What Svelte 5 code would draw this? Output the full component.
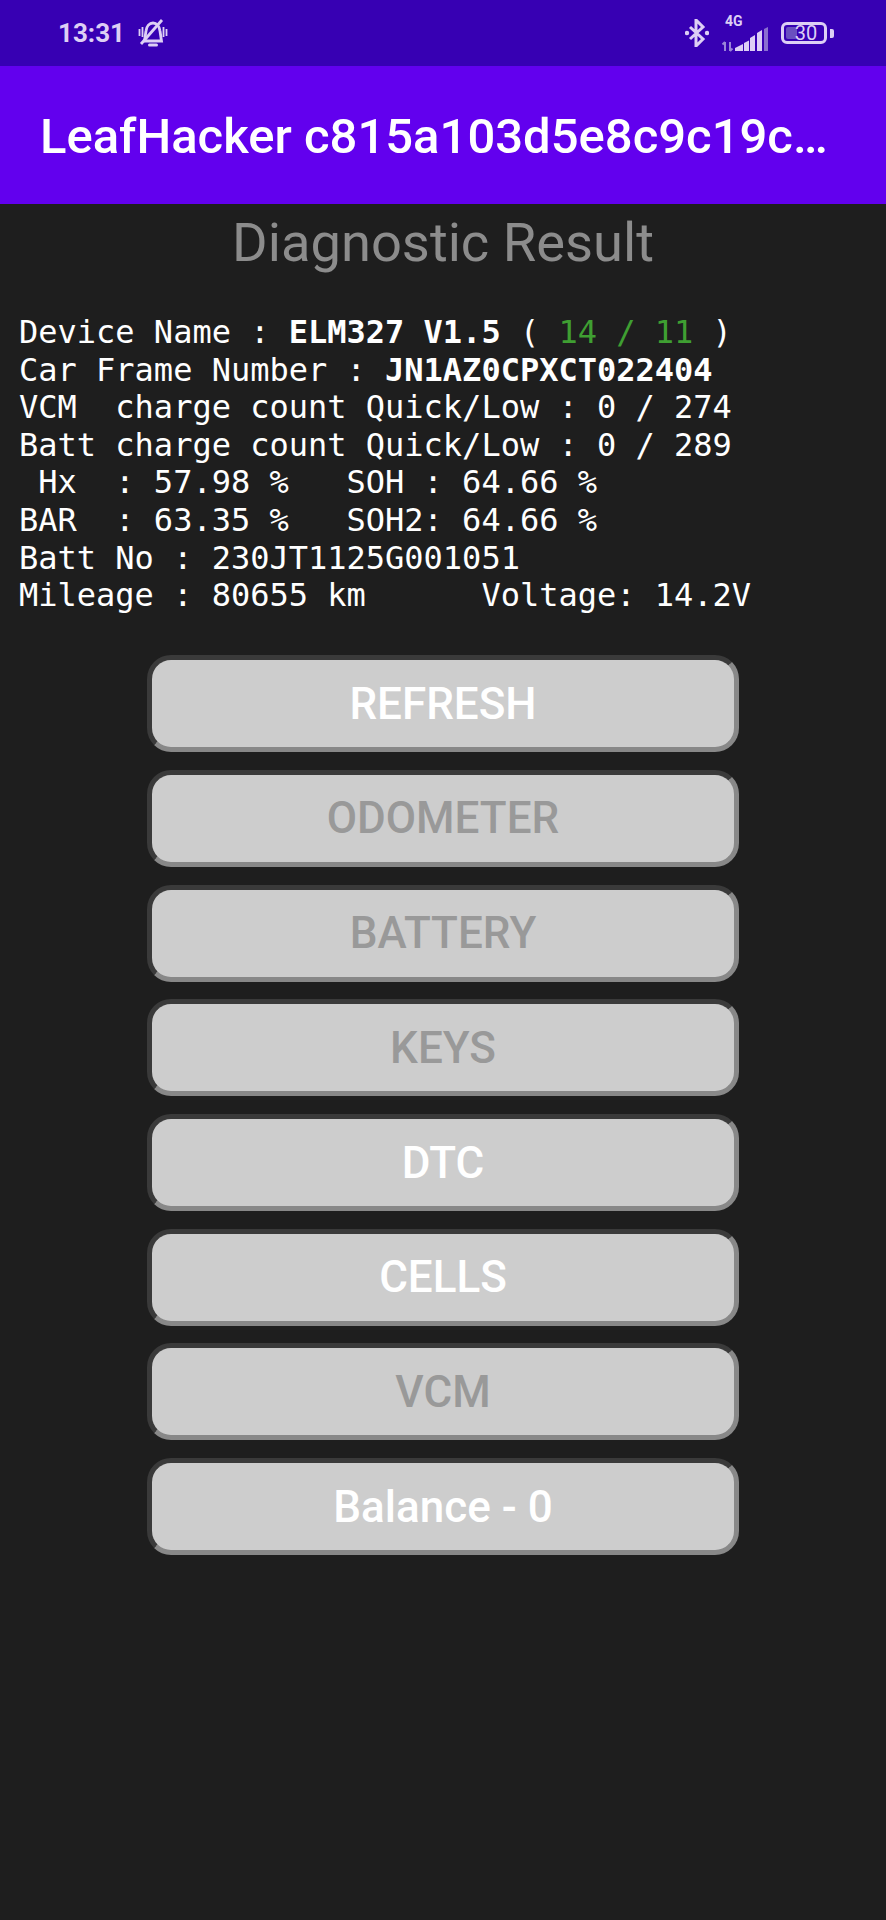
<script>
  const buttons = [
    { label: 'REFRESH', on: true },
    { label: 'ODOMETER', on: false },
    { label: 'BATTERY', on: false },
    { label: 'KEYS', on: false },
    { label: 'DTC', on: true },
    { label: 'CELLS', on: true },
    { label: 'VCM', on: false },
    { label: 'Balance - 0', on: true }
  ];
</script>

<div class="page">
  <header class="status">
    <div class="left">
      <span class="time">13:31</span>
      <svg class="bell" width="30" height="28" viewBox="0 0 30 28" fill="none" stroke="#ddcff5" stroke-width="2.800">
        <path d="M6.500 22 8 12c.5-5 3.500-8 7-8s6.500 3 7 8l1.500 10z" />
        <path d="M11.500 26h7" stroke-width="3" stroke-linecap="round" />
        <path d="M24 1 3 25" />
        <path d="M1.500 10v7M4.500 8v10M25.500 8v10M28.500 10v7" stroke-width="1.800" />
      </svg>
    </div>
    <div class="right">
      <svg width="24" height="28" viewBox="0 0 24 28" fill="none" stroke="#ddcff5" stroke-width="3">
        <path d="M5 8 18 20l-7 7V1l7 7L5 20" />
        <circle cx="2" cy="14" r="2.200" fill="#ddcff5" stroke="none" />
        <circle cx="22" cy="14" r="2.200" fill="#ddcff5" stroke="none" />
      </svg>
      <div class="net">
        <span class="g">4G</span>
        <svg class="bars" width="48" height="26" viewBox="0 0 48 26">
          <path d="M4 25V16M1.500 18.500 4 16M9 16v9M9 25l2.500-2.500" stroke="#9a84d8" stroke-width="2" fill="none" />
          <path d="M14 25v-3l8-4v7zM23 25v-8l5-2.500V25zM29 25V12l5-3v16zM36 25V7l5-3v21z" fill="#ddcff5" />
          <path d="M43 25V3l4-2v24z" fill="#8a6fd0" />
        </svg>
      </div>
      <div class="batt">
        <div class="shell"><span class="level"></span><span class="num">30</span></div>
        <span class="nub"></span>
      </div>
    </div>
  </header>

  <div class="appbar"><h1>LeafHacker c815a103d5e8c9c19c…</h1></div>

  <main>
    <h2>Diagnostic Result</h2>
    <pre class="info">Device Name : <b>ELM327 V1.5</b> ( <span class="green">14 / 11</span> )
Car Frame Number : <b>JN1AZ0CPXCT022404</b>
VCM  charge count Quick/Low : 0 / 274
Batt charge count Quick/Low : 0 / 289
 Hx  : 57.98 %   SOH : 64.66 %
BAR  : 63.35 %   SOH2: 64.66 %
Batt No : 230JT1125G001051
Mileage : 80655 km      Voltage: 14.2V</pre>

    <div class="buttons">
      {#each buttons as b}
        <button class:on={b.on}>{b.label}</button>
      {/each}
    </div>
  </main>
</div>

<style>
  :global(body) {
    margin: 0;
    background: #1e1e1e;
  }
  .page {
    width: 886px;
    height: 1920px;
    background: #1e1e1e;
    font-family: Roboto, sans-serif;
    overflow: hidden;
  }
  .status {
    height: 66px;
    background: #3700b3;
    display: flex;
    justify-content: space-between;
    align-items: center;
    padding: 0 52px 0 58px;
    box-sizing: border-box;
    color: #ddcff5;
  }
  .left, .right {
    display: flex;
    align-items: center;
  }
  .left { gap: 13px; }
  .right { gap: 12px; }
  .time {
    font-size: 26px;
    font-weight: 700;
  }
  .net {
    position: relative;
    width: 48px;
    height: 38px;
    display: flex;
    flex-direction: column;
    justify-content: flex-end;
  }
  .bars { display: block; }
  .g {
    position: absolute;
    left: 4px;
    top: 0;
    font-size: 14px;
    font-weight: 700;
    line-height: 14px;
  }
  .batt {
    display: flex;
    align-items: center;
    gap: 3px;
  }
  .shell {
    position: relative;
    width: 40px;
    height: 16px;
    border: 3px solid #ddcff5;
    border-radius: 6px;
    display: flex;
    align-items: center;
    justify-content: center;
  }
  .level {
    position: absolute;
    left: 2px;
    top: 2px;
    bottom: 2px;
    width: 11px;
    background: #6a4fc0;
    border-radius: 2px;
  }
  .num {
    position: relative;
    font-size: 20px;
    line-height: 16px;
    padding-left: 4px;
  }
  .nub {
    width: 4px;
    height: 9px;
    background: #ddcff5;
    border-radius: 0 2px 2px 0;
  }
  .appbar {
    height: 138px;
    background: #6200ee;
    display: flex;
    align-items: center;
    padding: 0 0 0 40px;
  }
  h1 {
    margin: 3px 0 0;
    color: #fff;
    font-size: 49px;
    font-weight: 500;
    white-space: nowrap;
  }
  main {
    display: flex;
    flex-direction: column;
  }
  h2 {
    margin: 0;
    padding-top: 8px;
    font-size: 54.300px;
    line-height: 62px;
    font-weight: 400;
    color: #8c8c8c;
    text-align: center;
  }
  .info {
    margin: 40px 0 0;
    padding-left: 19px;
    font-family: "DejaVu Sans Mono", "Liberation Mono", monospace;
    font-size: 32px;
    line-height: 37.600px;
    color: #fff;
  }
  .green { color: #3f9f32; }
  .buttons {
    margin-top: 40.500px;
    display: flex;
    flex-direction: column;
    align-items: center;
    gap: 17.700px;
  }
  button {
    width: 592px;
    height: 97px;
    box-sizing: border-box;
    background: #cdcdcd;
    border: 5px solid;
    border-color: #3a3a3a #888 #888 #3a3a3a;
    border-radius: 24px;
    font-family: Roboto, sans-serif;
    font-size: 44px;
    font-weight: 500;
    color: #999;
    padding: 0;
  }
  button.on { color: #fff; }
</style>
